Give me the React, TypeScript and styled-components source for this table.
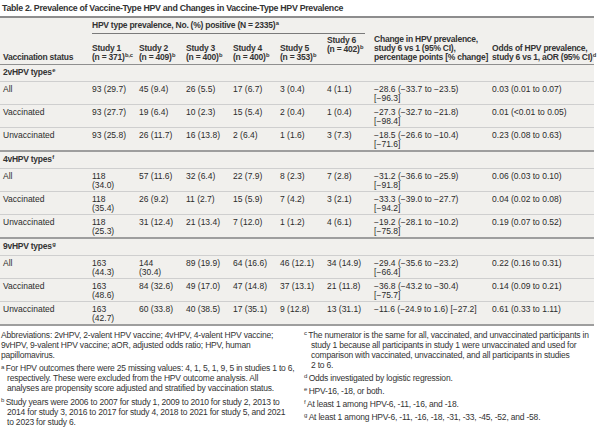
import React from "react";
import styled, { createGlobalStyle } from "styled-components";

const Global = createGlobalStyle`
  html, body { margin: 0; padding: 0; background: #ffffff; }
  body {
    font-family: "Liberation Sans", Arial, sans-serif;
    color: #2e2e2e;
  }
`;

const Page = styled.div`
  width: 600px;
  height: 434px;
  overflow: hidden;
`;

const Title = styled.h1`
  margin: 0;
  padding: 2px 0 0 2px;
  height: 16px;
  box-sizing: border-box;
  font-size: 8.8px;
  line-height: 12px;
  font-weight: 700;
  letter-spacing: -0.3px;
  color: #333333;
  white-space: nowrap;
`;

const Table = styled.table`
  width: 594px;
  table-layout: fixed;
  border-collapse: collapse;
  background: #f1f0ed;
  border-top: 2px solid #8d8d8d;
  font-size: 8.5px;
  line-height: 9px;
`;

const HeadRow = styled.tr<{ $h: number }>`
  height: ${(p) => p.$h}px;
`;

const Th = styled.th<{ $valign?: "top" | "bottom"; $rule?: boolean }>`
  text-align: left;
  font-weight: 700;
  letter-spacing: -0.25px;
  white-space: nowrap;
  color: #333333;
  vertical-align: ${(p) => p.$valign ?? "bottom"};
  padding: 1.5px 4px 2px 3px;
  border-bottom: ${(p) => (p.$rule ? "1px solid #8f8f8f" : "none")};
`;

const SpanTh = styled.th`
  text-align: left;
  font-weight: 700;
  letter-spacing: -0.25px;
  white-space: nowrap;
  color: #333333;
  vertical-align: top;
  padding: 3px 6px 0 3px;
`;

const SpanLabel = styled.div`
  padding-bottom: 3px;
  border-bottom: 1px solid #7a7a7a;
`;

const Sup = styled.span`
  font-size: 5.8px;
  line-height: 0;
  vertical-align: 3px;
  margin-left: 0.5px;
`;

const BandCell = styled.td`
  padding: 3px 3px 4px 3px;
  font-weight: 700;
  letter-spacing: -0.25px;
  color: #333333;
  border-bottom: 1px solid #cfcfcf;
`;

const DataRow = styled.tr<{ $last?: boolean }>`
  & > td {
    border-bottom: ${(p) => (p.$last ? "2px solid #9e9e9e" : "1px solid #cfcfcf")};
  }
`;

const Td = styled.td<{ $pr?: number }>`
  vertical-align: top;
  padding: 3px ${(p) => p.$pr ?? 8}px 1px 3px;
  color: #2b2b2b;
`;

const Notes = styled.div`
  display: grid;
  grid-template-columns: 296px 289px;
  column-gap: 7px;
  padding: 4px 0 0 1px;
  font-size: 8.5px;
  line-height: 10px;
  letter-spacing: -0.2px;
  white-space: nowrap;
  color: #333333;
`;

const NoteCol = styled.div<{ $gap: number }>`
  display: flex;
  flex-direction: column;
  gap: ${(p) => p.$gap}px;
`;

const Note = styled.p<{ $indent?: number }>`
  margin: 0;
  padding-left: ${(p) => p.$indent ?? 0}px;
  text-indent: -${(p) => p.$indent ?? 0}px;
`;

const Mark = styled.span`
  font-size: 6px;
  line-height: 0;
  vertical-align: 2.5px;
  margin-right: 1.5px;
`;

type Group = { label: string; mark: string; rows: string[][] };

const groups: Group[] = [
  {
    label: "2vHPV types",
    mark: "e",
    rows: [
      ["All", "93 (29.7)", "45 (9.4)", "26 (5.5)", "17 (6.7)", "3 (0.4)", "4 (1.1)", "−28.6 (−33.7 to −23.5) [−96.3]", "0.03 (0.01 to 0.07)"],
      ["Vaccinated", "93 (27.7)", "19 (6.4)", "10 (2.3)", "15 (5.4)", "2 (0.4)", "1 (0.4)", "−27.3 (−32.7 to −21.8) [−98.4]", "0.01 (<0.01 to 0.05)"],
      ["Unvaccinated", "93 (25.8)", "26 (11.7)", "16 (13.8)", "2 (6.4)", "1 (1.6)", "3 (7.3)", "−18.5 (−26.6 to −10.4) [−71.6]", "0.23 (0.08 to 0.63)"],
    ],
  },
  {
    label: "4vHPV types",
    mark: "f",
    rows: [
      ["All", "118 (34.0)", "57 (11.6)", "32 (6.4)", "22 (7.9)", "8 (2.3)", "7 (2.8)", "−31.2 (−36.6 to −25.9) [−91.8]", "0.06 (0.03 to 0.10)"],
      ["Vaccinated", "118 (35.4)", "26 (9.2)", "11 (2.7)", "15 (5.9)", "7 (4.2)", "3 (2.1)", "−33.3 (−39.0 to −27.7) [−94.2]", "0.04 (0.02 to 0.08)"],
      ["Unvaccinated", "118 (25.3)", "31 (12.4)", "21 (13.4)", "7 (12.0)", "1 (1.2)", "4 (6.1)", "−19.2 (−28.1 to −10.2) [−75.8]", "0.19 (0.07 to 0.52)"],
    ],
  },
  {
    label: "9vHPV types",
    mark: "g",
    rows: [
      ["All", "163 (44.3)", "144 (30.4)", "89 (19.9)", "64 (16.6)", "46 (12.1)", "34 (14.9)", "−29.4 (−35.6 to −23.2) [−66.4]", "0.22 (0.16 to 0.31)"],
      ["Vaccinated", "163 (48.6)", "84 (32.6)", "49 (17.0)", "47 (14.8)", "37 (13.1)", "21 (11.8)", "−36.8 (−43.2 to −30.4) [−75.7]", "0.14 (0.09 to 0.21)"],
      ["Unvaccinated", "163 (42.7)", "60 (33.8)", "40 (38.5)", "17 (35.1)", "9 (12.8)", "13 (31.1)", "−11.6 (−24.9 to 1.6) [−27.2]", "0.61 (0.33 to 1.11)"],
    ],
  },
];

const studies = [
  { name: "Study 1", n: "371", sup: "b,c" },
  { name: "Study 2", n: "409", sup: "b" },
  { name: "Study 3", n: "400", sup: "b" },
  { name: "Study 4", n: "400", sup: "b" },
  { name: "Study 5", n: "353", sup: "b" },
  { name: "Study 6", n: "402", sup: "b" },
];

const colWidths = [89, 47, 47, 47, 47, 47, 47, 118, 105];

const padRight = (i: number) => (i === 0 ? 4 : i === 7 ? 10 : i === 8 ? 6 : 8);

type FootNote = { mark?: string; lines: string[] };

const leftNotes: FootNote[] = [
  {
    lines: [
      "Abbreviations: 2vHPV, 2-valent HPV vaccine; 4vHPV, 4-valent HPV vaccine;",
      "9vHPV, 9-valent HPV vaccine; aOR, adjusted odds ratio; HPV, human",
      "papillomavirus.",
    ],
  },
  {
    mark: "a",
    lines: [
      "For HPV outcomes there were 25 missing values: 4, 1, 5, 1, 9, 5 in studies 1 to 6,",
      "respectively. These were excluded from the HPV outcome analysis. All",
      "analyses are propensity score adjusted and stratified by vaccination status.",
    ],
  },
  {
    mark: "b",
    lines: [
      "Study years were 2006 to 2007 for study 1, 2009 to 2010 for study 2, 2013 to",
      "2014 for study 3, 2016 to 2017 for study 4, 2018 to 2021 for study 5, and 2021",
      "to 2023 for study 6.",
    ],
  },
];

const rightNotes: FootNote[] = [
  {
    mark: "c",
    lines: [
      "The numerator is the same for all, vaccinated, and unvaccinated participants in",
      "study 1 because all participants in study 1 were unvaccinated and used for",
      "comparison with vaccinated, unvaccinated, and all participants in studies",
      "2 to 6.",
    ],
  },
  { mark: "d", lines: ["Odds investigated by logistic regression."] },
  { mark: "e", lines: ["HPV-16, -18, or both."] },
  { mark: "f", lines: ["At least 1 among HPV-6, -11, -16, and -18."] },
  { mark: "g", lines: ["At least 1 among HPV-6, -11, -16, -18, -31, -33, -45, -52, and -58."] },
];

function renderNote(n: FootNote, i: number, indent: number) {
  return (
    <Note key={i} $indent={n.mark ? indent : 0}>
      {n.mark && <Mark>{n.mark}</Mark>}
      {n.lines.map((l, li) => (
        <React.Fragment key={li}>
          {li > 0 && <br />}
          {l}
        </React.Fragment>
      ))}
    </Note>
  );
}

export default function App() {
  return (
    <Page>
      <Global />
      <Title>Table 2. Prevalence of Vaccine-Type HPV and Changes in Vaccine-Type HPV Prevalence</Title>
      <Table>
        <colgroup>
          {colWidths.map((w, i) => (
            <col key={i} style={{ width: w }} />
          ))}
        </colgroup>
        <thead>
          <HeadRow $h={16}>
            <Th rowSpan={2} $rule>
              Vaccination status
            </Th>
            <SpanTh colSpan={6}>
              <SpanLabel>
                HPV type prevalence, No. (%) positive (N = 2335)<Sup>a</Sup>
              </SpanLabel>
            </SpanTh>
            <Th rowSpan={2} $rule>
              Change in HPV prevalence,
              <br />
              study 6 vs 1 (95% CI),
              <br />
              percentage points [% change]
            </Th>
            <Th rowSpan={2} $rule>
              Odds of HPV prevalence,
              <br />
              study 6 vs 1, aOR (95% CI)<Sup>d</Sup>
            </Th>
          </HeadRow>
          <HeadRow $h={30}>
            {studies.map((s, i) => (
              <Th key={s.name} $rule $valign={i === 5 ? "top" : "bottom"}>
                {s.name}
                <br />
                (n = {s.n})<Sup>{s.sup}</Sup>
              </Th>
            ))}
          </HeadRow>
        </thead>
        <tbody>
          {groups.map((g) => (
            <React.Fragment key={g.label}>
              <tr>
                <BandCell colSpan={9}>
                  {g.label}
                  <Sup>{g.mark}</Sup>
                </BandCell>
              </tr>
              {g.rows.map((r, ri) => (
                <DataRow key={ri} $last={ri === g.rows.length - 1}>
                  {r.map((c, ci) => (
                    <Td key={ci} $pr={padRight(ci)}>
                      {c}
                    </Td>
                  ))}
                </DataRow>
              ))}
            </React.Fragment>
          ))}
        </tbody>
      </Table>
      <Notes>
        <NoteCol $gap={3.5}>{leftNotes.map((n, i) => renderNote(n, i, 6))}</NoteCol>
        <NoteCol $gap={3}>{rightNotes.map((n, i) => renderNote(n, i, 7))}</NoteCol>
      </Notes>
    </Page>
  );
}
